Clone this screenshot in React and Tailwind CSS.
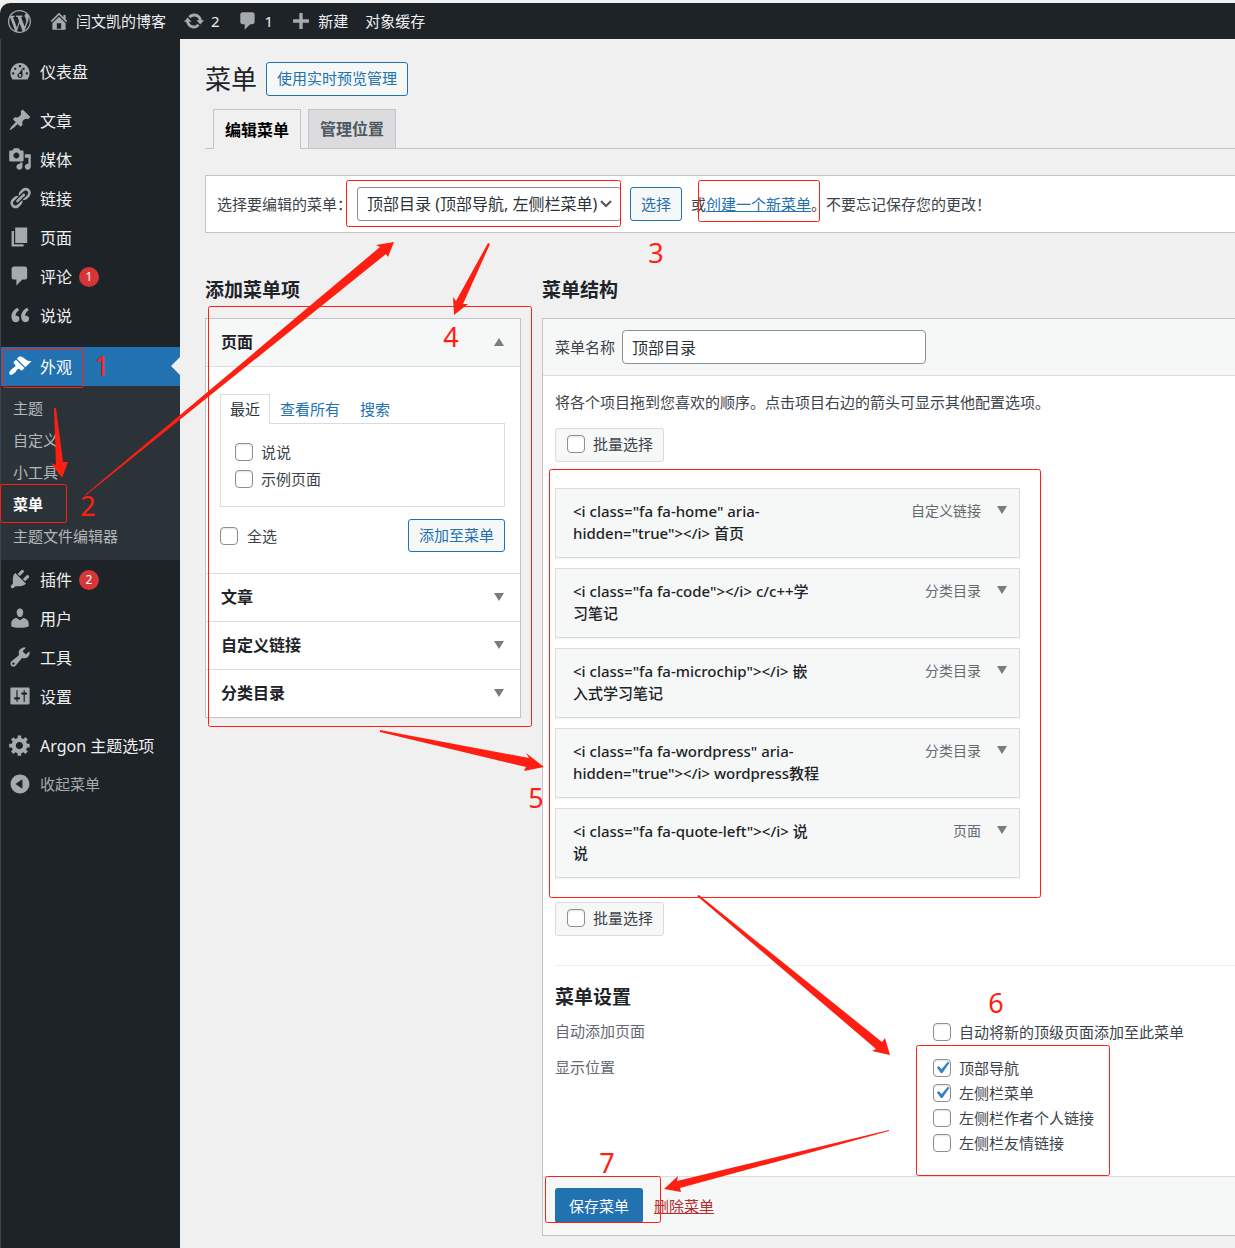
import React, { useState } from "react";
import clsx from "clsx";

const ICONS = {
  wordpress: "M20 10c0-5.51-4.49-10-10-10C4.48 0 0 4.49 0 10c0 5.52 4.48 10 10 10 5.51 0 10-4.48 10-10zM7.78 15.37L4.37 6.22c.55-.02 1.17-.08 1.17-.08.5-.06.44-1.13-.06-1.11 0 0-1.45.11-2.37.11-.18 0-.37 0-.58-.01C4.12 2.69 6.87 1.11 10 1.11c2.33 0 4.45.87 6.05 2.34-.68-.11-1.65.39-1.65 1.58 0 .74.45 1.36.9 2.1.35.61.55 1.36.55 2.46 0 1.49-1.4 5-1.4 5l-3.03-8.37c.54-.02.82-.17.82-.17.5-.05.44-1.25-.06-1.22 0 0-1.44.12-2.38.12-.87 0-2.33-.12-2.33-.12-.5-.03-.56 1.2-.06 1.22l.92.08 1.26 3.41zM17.41 10c.24-.64.74-1.87.43-4.25.7 1.29 1.05 2.71 1.05 4.25 0 3.29-1.73 6.24-4.4 7.78.97-2.59 1.94-5.2 2.92-7.78zM6.1 18.09C3.12 16.65 1.11 13.53 1.11 10c0-1.3.23-2.48.72-3.59C3.25 10.3 4.67 14.2 6.1 18.09zm4.03-6.63l2.58 6.98c-.86.29-1.76.45-2.71.45-.79 0-1.57-.11-2.29-.33.81-2.38 1.62-4.74 2.42-7.1z",
  home: "M16 8.5l1.53 1.53-1.06 1.06L10 4.6l-6.47 6.49-1.06-1.06L10 2.5l4 4v-2h2v4zm-6-2.46l6 5.99V18H4v-5.97zM12 17v-5H8v5h4z",
  update: "M10.2 3.28c3.53 0 6.43 2.61 6.92 6h2.08l-3.5 4-3.5-4h2.32c-.45-1.97-2.21-3.45-4.32-3.45-1.45 0-2.73.71-3.54 1.78L4.95 5.66C6.23 4.2 8.11 3.28 10.2 3.28zm-.4 13.44c-3.52 0-6.43-2.61-6.92-6H.8l3.5-4c1.17 1.33 2.33 2.67 3.5 4H5.48c.45 1.97 2.21 3.45 4.32 3.45 1.45 0 2.73-.71 3.54-1.78l1.71 1.95c-1.28 1.46-3.15 2.38-5.25 2.38z",
  plus: "M17.2 8.5v3h-5.7v5.7h-3v-5.7H2.8v-3h5.7V2.8h3v5.7z",
  dashboard: "M3.76 17h12.48c1.1-1.43 1.76-3.22 1.76-5.17C18 7.19 14.42 3.42 10 3.42s-8 3.77-8 8.41c0 1.95.66 3.74 1.76 5.17zM9 6c0-.55.45-1 1-1s1 .45 1 1-.45 1-1 1-1-.45-1-1zM5 8.2c0-.55.45-1 1-1s1 .45 1 1-.45 1-1 1-1-.45-1-1zm8-1c.55 0 1 .45 1 1s-.45 1-1 1-1-.45-1-1 .45-1 1-1zM3.3 12c0-.55.45-1 1-1s1 .45 1 1-.45 1-1 1-1-.45-1-1zm11.4 0c0-.55.45-1 1-1s1 .45 1 1-.45 1-1 1-1-.45-1-1zM11.8 8l.4 5.2c.2 1.5-.8 2.6-2.2 2.6s-2.4-1.2-2.1-2.5c.2-.9.9-1.4 1.6-1.7zm-1.7 4.6c-.6 0-1.1.5-1.1 1.1s.5 1.1 1.1 1.1 1-.5 1-1.1-.4-1.1-1-1.1z",
  post: "M10.44 3.02l1.82-1.82 6.36 6.35-1.83 1.82c-1.05-.68-2.48-.57-3.41.36l-.75.75c-.92.93-1.04 2.35-.35 3.41l-1.83 1.82-2.41-2.41-2.8 2.79c-.42.42-3.38 2.71-3.8 2.29s1.86-3.39 2.28-3.81l2.79-2.79L4.1 9.36l1.83-1.82c1.05.69 2.48.57 3.4-.36l.75-.75c.93-.92 1.05-2.35.36-3.41z",
  media: "M13 11V4c0-.55-.45-1-1-1h-1.67L9 1H5L3.67 3H2c-.55 0-1 .45-1 1v7c0 .55.45 1 1 1h10c.55 0 1-.45 1-1zM7 4.5c1.38 0 2.5 1.12 2.5 2.5S8.38 9.5 7 9.5 4.5 8.38 4.5 7 5.62 4.5 7 4.5zM14 6h5v10.5c0 1.38-1.12 2.5-2.5 2.5S14 17.88 14 16.5s1.12-2.5 2.5-2.5c.17 0 .34.02.5.05V9h-3V6zm-4 8.05V13h2v3.5c0 1.38-1.12 2.5-2.5 2.5S7 17.88 7 16.5 8.12 14 9.5 14c.17 0 .34.02.5.05z",
  links: "M17.74 2.76c1.68 1.69 1.68 4.41 0 6.1l-1.53 1.52c-1.12 1.12-2.7 1.47-4.14 1.09l2.62-2.61.76-.77.76-.76c.84-.84.84-2.2 0-3.04-.84-.85-2.2-.85-3.04 0l-.77.76-3.38 3.38c-.37-1.44-.02-3.02 1.1-4.14l1.52-1.53c1.69-1.68 4.42-1.68 6.1 0zM8.59 13.43l5.34-5.34c.42-.42.42-1.1 0-1.52-.44-.43-1.13-.39-1.53 0l-5.33 5.34c-.42.42-.42 1.1 0 1.52.44.43 1.13.39 1.52 0zm-.76 2.29l4.14-4.15c.38 1.44.03 3.02-1.09 4.14l-1.52 1.53c-1.69 1.68-4.41 1.68-6.1 0-1.68-1.68-1.68-4.42 0-6.1l1.53-1.52c1.12-1.12 2.7-1.47 4.14-1.1l-4.14 4.15c-.85.84-.85 2.2 0 3.05.84.84 2.2.84 3.04 0z",
  page: "M6 15V2h10v13H6zm-1 1h8v2H3V5h2v11z",
  comments: "M5 2h9c1.1 0 2 .9 2 2v7c0 1.1-.9 2-2 2h-2l-5 5v-5H5c-1.1 0-2-.9-2-2V4c0-1.1.9-2 2-2z",
  quote: "M9.49 13.22c0-.74-.2-1.38-.61-1.9-.62-.78-1.83-.88-2.53-.72-.29-1.65 1.11-3.75 2.92-4.65L7.88 4c-2.73 1.3-5.42 4.28-4.96 8.05C3.21 14.43 4.59 16 6.54 16c.85 0 1.56-.25 2.12-.75s.83-1.18.83-2.03zm8.05 0c0-.74-.2-1.38-.61-1.9-.63-.78-1.83-.88-2.53-.72-.29-1.65 1.11-3.75 2.92-4.65L15.93 4c-2.73 1.3-5.41 4.28-4.95 8.05.29 2.38 1.66 3.95 3.61 3.95.85 0 1.56-.25 2.12-.75s.83-1.18.83-2.03z",
  appearance: "M14.48 11.06L7.41 3.99l1.5-1.5c.5-.56 2.3-.47 3.51.32 1.21.8 1.43 1.28 2.91 2.1 1.18.64 2.45 1.26 4.45.85zm-.71.71L6.7 4.7 4.93 6.47c-.39.39-.39 1.02 0 1.41l1.06 1.06c.39.39.39 1.03 0 1.42-.6.6-1.43 1.11-2.21 1.69-.35.26-.7.53-1.01.84C1.43 14.23.4 16.08 1.4 17.07c.99 1 2.84-.03 4.18-1.36.31-.31.58-.66.85-1.02.57-.78 1.08-1.61 1.69-2.21.39-.39 1.02-.39 1.41 0l1.06 1.06c.39.39 1.02.39 1.41 0z",
  plugins: "M13.11 4.36L9.87 7.6 8 5.73l3.24-3.24c.35-.34 1.05-.2 1.56.32.52.51.66 1.21.31 1.55zm-8 1.77l.91-1.12 9.01 9.01-1.19.84c-.71.71-2.63 1.16-3.82 1.16H6.14L4.9 17.26c-.59.59-1.54.59-2.12 0-.59-.58-.59-1.53 0-2.12l1.24-1.24v-3.88c0-1.13.4-3.19 1.09-3.89zm7.26 3.97l3.24-3.24c.34-.35 1.04-.21 1.55.31.52.51.66 1.21.31 1.55l-3.24 3.25z",
  users: "M10 9.25c-2.27 0-2.73-3.44-2.73-3.44C7 4.02 7.82 2 9.97 2c2.16 0 2.98 2.02 2.71 3.81 0 0-.41 3.44-2.68 3.44zm0 2.57L12.72 10c2.39 0 4.52 2.33 4.52 4.53v2.49s-3.65 1.13-7.24 1.13c-3.65 0-7.24-1.13-7.24-1.13v-2.49c0-2.25 1.94-4.48 4.47-4.48z",
  tools: "M16.68 9.77c-1.34 1.34-3.3 1.67-4.95.99l-5.41 6.52c-.99.99-2.59.99-3.58 0s-.99-2.59 0-3.57l6.52-5.42c-.68-1.65-.35-3.61.99-4.95 1.28-1.28 3.12-1.62 4.72-1.06l-2.89 2.89 2.82 2.82 2.86-2.87c.53 1.58.18 3.39-1.08 4.65zM3.81 16.21c.4.39 1.04.39 1.43 0 .4-.4.4-1.04 0-1.43-.39-.4-1.03-.4-1.43 0-.39.39-.39 1.03 0 1.43z",
  settings: "M18 16V4c0-.55-.45-1-1-1H3c-.55 0-1 .45-1 1v12c0 .55.45 1 1 1h14c.55 0 1-.45 1-1zM8 11h1c.55 0 1 .45 1 1s-.45 1-1 1H8v1.5c0 .28-.22.5-.5.5s-.5-.22-.5-.5V13H6c-.55 0-1-.45-1-1s.45-1 1-1h1V5.5c0-.28.22-.5.5-.5s.5.22.5.5V11zm5-2h-1c-.55 0-1-.45-1-1s.45-1 1-1h1V5.5c0-.28.22-.5.5-.5s.5.22.5.5V7h1c.55 0 1 .45 1 1s-.45 1-1 1h-1v5.5c0 .28-.22.5-.5.5s-.5-.22-.5-.5V9z",
  generic: "M18 12h-2.18c-.17.7-.44 1.35-.81 1.93l1.54 1.54-2.1 2.1-1.54-1.54c-.58.36-1.23.63-1.91.79V19H8v-2.18c-.68-.16-1.33-.43-1.91-.79l-1.54 1.54-2.12-2.12 1.54-1.54c-.36-.58-.63-1.23-.79-1.91H1V9.03h2.17c.16-.7.44-1.35.8-1.94L2.43 5.55l2.1-2.1 1.54 1.54c.58-.37 1.24-.64 1.93-.81V2h3v2.18c.68.16 1.33.43 1.91.79l1.54-1.54 2.12 2.12-1.54 1.54c.36.59.64 1.24.8 1.94H18V12zm-8.5 1.5c1.66 0 3-1.34 3-3s-1.34-3-3-3-3 1.34-3 3 1.34 3 3 3z",
  collapse: "M10 2.16c4.33 0 7.84 3.51 7.84 7.84s-3.51 7.84-7.84 7.84S2.16 14.33 2.16 10 5.71 2.16 10 2.16zm2 11.72V6.12L6.18 10z",
};

const MENU_TOP = [
  { icon: "post", label: "文章" },
  { icon: "media", label: "媒体" },
  { icon: "links", label: "链接" },
  { icon: "page", label: "页面" },
  { icon: "comments", label: "评论", count: 1 },
  { icon: "quote", label: "说说" },
];

const SUBMENU = ["主题", "自定义", "小工具", "菜单", "主题文件编辑器"];

const MENU_BOTTOM = [
  { icon: "plugins", label: "插件", count: 2 },
  { icon: "users", label: "用户" },
  { icon: "tools", label: "工具" },
  { icon: "settings", label: "设置" },
];

const NAV_ITEMS = [
  { title: '<i class="fa fa-home" aria-hidden="true"></i> 首页', type: "自定义链接" },
  { title: '<i class="fa fa-code"></i> c/c++学习笔记', type: "分类目录" },
  { title: '<i class="fa fa-microchip"></i> 嵌入式学习笔记', type: "分类目录" },
  { title: '<i class="fa fa-wordpress" aria-hidden="true"></i> wordpress教程', type: "分类目录" },
  { title: '<i class="fa fa-quote-left"></i> 说说', type: "页面" },
];

const LOCATIONS = [
  { label: "顶部导航", on: true },
  { label: "左侧栏菜单", on: true },
  { label: "左侧栏作者个人链接", on: false },
  { label: "左侧栏友情链接", on: false },
];

function Icon({ name, className = "size-[22px]" }) {
  return (
    <svg viewBox="0 0 20 20" className={clsx("shrink-0 fill-current", className)} aria-hidden="true">
      <path fillRule="evenodd" d={ICONS[name]} />
    </svg>
  );
}

function Caret({ up }) {
  return (
    <svg viewBox="0 0 10 8" className="h-2 w-[10px] shrink-0 fill-[#787c82]" aria-hidden="true">
      <path d={up ? "M5 0l5 8H0z" : "M0 0h10L5 8z"} />
    </svg>
  );
}

function Check({ label, defaultChecked = false, className = "gap-2" }) {
  const [on, setOn] = useState(defaultChecked);
  return (
    <label className={clsx("flex items-center", className)}>
      <span className="relative flex size-[18px] shrink-0">
        <input type="checkbox" checked={on} onChange={() => setOn((v) => !v)} className="size-[18px] appearance-none rounded border border-[#8c8f94] bg-white shadow-[inset_0_1px_2px_rgba(0,0,0,0.1)]" />
        {on && (
          <svg viewBox="0 0 20 20" className="pointer-events-none absolute -left-[3px] -top-[3px] size-6 fill-[#3582c4]" aria-hidden="true">
            <path d="M14.83 4.89l1.34.94-5.81 8.38H9.02L5.78 9.67l1.34-1.25 2.57 2.4z" />
          </svg>
        )}
      </span>
      {label}
    </label>
  );
}

function OutlineButton({ children, className }) {
  return (
    <button type="button" className={clsx("shrink-0 rounded-[3px] border border-[#2271b1] bg-[#f6f7f7] px-[10px] text-[#2271b1]", className)}>
      {children}
    </button>
  );
}

function BarItem({ icon, children }) {
  return (
    <a href="#" className="flex items-center gap-[6px]">
      {icon && <span className="text-[#a7aaad]"><Icon name={icon} /></span>}
      {children}
    </a>
  );
}

function AdminBar() {
  return (
    <header className="flex h-9 items-center gap-[17px] rounded-tl-[10px] bg-[#1d2327] pl-2 text-[#f0f0f1]">
      <a href="#" aria-label="WordPress" className="text-[#a7aaad]"><Icon name="wordpress" className="size-[23px]" /></a>
      <BarItem icon="home">闫文凯的博客</BarItem>
      <BarItem icon="update">2</BarItem>
      <BarItem icon="comments">1</BarItem>
      <BarItem icon="plus">新建</BarItem>
      <BarItem>对象缓存</BarItem>
    </header>
  );
}

function SideItem({ icon, label, count, current, muted }) {
  return (
    <a href="#" className={clsx("relative flex h-[39px] items-center gap-2 pl-[7px] text-base", current ? "bg-[#2271b1] text-white" : muted ? "text-[#a7aaad]" : "text-[#f0f0f1]")}>
      <span className={clsx("pb-[2px]", current ? "text-white" : "text-[#a7aaad]")}><Icon name={icon} className="size-6" /></span>
      <span className={muted ? "text-[15px]" : ""}>{label}</span>
      {count && <span className="-ml-px flex size-5 items-center justify-center rounded-full bg-[#d63638] text-xs text-white">{count}</span>}
      {current && <span className="absolute right-0 top-[10px] border-y-[9px] border-r-[9px] border-y-transparent border-r-[#f0f0f1]" />}
    </a>
  );
}

function Sidebar() {
  return (
    <aside className="w-[180px] shrink-0 border-l border-[#3c4349] bg-[#1d2327] pt-[13px]">
      <SideItem icon="dashboard" label="仪表盘" />
      <nav className="mt-[10px]">
        {MENU_TOP.map((m) => <SideItem key={m.label} {...m} />)}
      </nav>
      <div className="mt-3">
        <SideItem icon="appearance" label="外观" current />
        <ul className="bg-[#2c3338] pb-2 pt-[6px]">
          {SUBMENU.map((s) => (
            <li key={s}>
              <a href="#" className={clsx("flex h-8 items-center pl-3", s === "菜单" ? "font-bold text-white" : "text-[#b5b8bb]")}>{s}</a>
            </li>
          ))}
        </ul>
        {MENU_BOTTOM.map((m) => <SideItem key={m.label} {...m} />)}
      </div>
      <div className="mt-[10px]">
        <SideItem icon="generic" label="Argon 主题选项" />
        <SideItem icon="collapse" label="收起菜单" muted />
      </div>
    </aside>
  );
}

function AddItems() {
  return (
    <section className="w-[316px] shrink-0">
      <h2 className="text-[19px] font-bold leading-[26px] text-[#1d2327]">添加菜单项</h2>
      <div className="mt-[15px] border border-[#c3c4c7] bg-white">
        <button type="button" className="flex h-12 w-full items-center justify-between border-b border-[#dcdcde] bg-[#f6f7f7] pb-px pl-[15px] pr-4 text-base font-bold text-[#1d2327]">
          页面 <Caret up />
        </button>
        <div className="pb-[21px] pl-[14px] pr-[15px] pt-[27px]">
          <div className="flex h-[30px] items-stretch">
            <button type="button" className="relative border border-b-0 border-[#dcdcde] bg-white px-[9px] pb-[2px] text-[#2c3338]">最近</button>
            <button type="button" className="px-[10px] pb-px text-[#2271b1]">查看所有</button>
            <button type="button" className="px-[10px] pb-px text-[#2271b1]">搜索</button>
          </div>
          <div className="-mt-px flex h-[84px] flex-col border border-[#dcdcde] px-[14px] pt-[14px]">
            <Check label="说说" className="h-[27px] gap-2" />
            <Check label="示例页面" className="h-[27px] gap-2" />
          </div>
          <div className="mt-3 flex items-center justify-between">
            <Check label="全选" className="gap-[9px]" />
            <OutlineButton className="h-[33px] pb-px">添加至菜单</OutlineButton>
          </div>
        </div>
        {["文章", "自定义链接", "分类目录"].map((t) => (
          <button key={t} type="button" className="flex h-12 w-full items-center justify-between border-t border-[#dcdcde] pb-[2px] pl-[15px] pr-4 text-base font-bold text-[#1d2327]">
            {t} <Caret />
          </button>
        ))}
      </div>
    </section>
  );
}

function BulkSelect() {
  return (
    <div className="flex">
      <Check label="批量选择" className="h-[34px] gap-2 rounded-[3px] border border-[#dcdcde] bg-[#f6f7f7] pb-[2px] pl-[11px] pr-[10px]" />
    </div>
  );
}

function MenuStructure() {
  const [name, setName] = useState("顶部目录");
  return (
    <section className="min-w-0 flex-1">
      <h2 className="text-[19px] font-bold leading-[26px] text-[#1d2327]">菜单结构</h2>
      <div className="mt-[15px] border-y border-l border-[#c3c4c7] bg-white">
        <div className="flex items-center gap-[7px] border-b border-[#dcdcde] bg-[#f6f7f7] px-3 py-[11px]">
          <label htmlFor="menu-name">菜单名称</label>
          <input id="menu-name" value={name} onChange={(e) => setName(e.target.value)} className="h-[34px] w-[304px] rounded border border-[#8c8f94] bg-white px-[9px] text-base text-[#2c3338]" />
        </div>
        <div className="pb-5 pl-3 pt-[14px]">
          <p className="mb-[14px] leading-6">将各个项目拖到您喜欢的顺序。点击项目右边的箭头可显示其他配置选项。</p>
          <BulkSelect />
          <ul className="mb-6 mt-[26px] flex w-[465px] flex-col gap-[10px]">
            {NAV_ITEMS.map((n) => (
              <li key={n.title} className="flex h-[70px] border border-[#dcdcde] bg-[#f6f7f7] pl-[17px] pr-3 pt-[11px] shadow-[0_1px_1px_rgba(0,0,0,0.04)]">
                <span className="w-[248px] font-medium leading-[22px] text-[#1d2327]">{n.title}</span>
                <span className="ml-auto text-sm leading-[22px] text-[#646970]">{n.type}</span>
                <button type="button" aria-label="展开" className="ml-4 flex h-5 items-center"><Caret /></button>
              </li>
            ))}
          </ul>
          <BulkSelect />
          <div className="mt-[29px] border-t border-[#f0f0f1] pt-[18px]">
            <h3 className="text-[19px] font-bold leading-[26px] text-[#1d2327]">菜单设置</h3>
            <div className="mt-[9px] flex">
              <span className="w-[378px] shrink-0 leading-6 text-[#646970]">自动添加页面</span>
              <Check label="自动将新的顶级页面添加至此菜单" className="h-[25px] gap-2" />
            </div>
            <div className="mt-[11px] flex">
              <span className="w-[378px] shrink-0 leading-6 text-[#646970]">显示位置</span>
              <div>
                {LOCATIONS.map((l) => <Check key={l.label} label={l.label} defaultChecked={l.on} className="h-[25px] gap-2" />)}
              </div>
            </div>
          </div>
        </div>
        <div className="mt-px flex items-center gap-[11px] border-t border-[#dcdcde] bg-[#f6f7f7] px-3 pb-3 pt-[11px]">
          <button type="button" className="h-[35px] rounded-[3px] bg-[#2271b1] px-[14px] text-white">保存菜单</button>
          <a href="#" className="text-[#b32d2e] underline">删除菜单</a>
        </div>
      </div>
    </section>
  );
}

const BOXES = [
  [3, 348, 80, 39],
  [0, 484, 66, 38],
  [346, 180, 274, 46],
  [698, 180, 121, 41],
  [208, 306, 323, 420],
  [549, 469, 491, 428],
  [916, 1045, 193, 130],
  [545, 1176, 115, 46],
];

const ARROWS = [
  "54,408 56,408 63,462 68,462 62,478 51,463 56,465",
  "85,496 86,494 380,247 376,245 394,242 388,257 386,254",
  "488,243 490,244 463,304 468,304 454,315 453,297 456,301",
  "380,730 529,758 526,753 544,767 524,771 526,767 380,732",
  "697,896 699,895 882,1042 885,1038 890,1055 872,1051 876,1049",
  "889,1130 889,1131 680,1188 681,1192 664,1189 678,1176 677,1181",
];

const STEPS = [
  [102, 376], [88, 516], [656, 263], [451, 347], [536, 808], [996, 1013], [607, 1173],
];

// Step-by-step marks drawn over the page
function Annotations() {
  return (
    <svg width="1235" height="1248" className="pointer-events-none absolute left-0 top-0 fill-[#ff1f12]" aria-hidden="true">
      {BOXES.map(([x, y, w, h]) => (
        <rect key={`${x}-${y}`} x={x + 0.5} y={y + 0.5} width={w} height={h} rx="2" fill="none" stroke="#ff1f12" />
      ))}
      {ARROWS.map((p) => <polygon key={p} points={p} />)}
      {STEPS.map(([x, y], i) => (
        <text key={i} x={x} y={y} textAnchor="middle" fontSize="27">{i + 1}</text>
      ))}
    </svg>
  );
}

export default function App() {
  return (
    <div className="relative flex min-h-screen flex-col overflow-hidden bg-[#f0f0f1] pt-[3px] font-['Noto_Sans','Noto_Sans_CJK_SC',sans-serif] text-[15px] leading-6 text-[#3c434a]">
      <AdminBar />
      <div className="flex flex-1">
        <Sidebar />
        <main className="min-w-0 flex-1 pb-3 pl-[25px] pt-[23px]">
          <div className="flex h-[34px] items-center gap-[9px]">
            <h1 className="text-[26px] leading-[34px] text-[#1d2327]">菜单</h1>
            <OutlineButton className="h-[34px] pb-[2px]">使用实时预览管理</OutlineButton>
          </div>
          <nav className="mt-[13px] flex h-10 gap-[7px] border-b border-[#c3c4c7] pl-2 text-base font-semibold">
            <a href="#" className="-mb-px flex items-center border border-b-0 border-[#c3c4c7] bg-[#f0f0f1] px-[11px] text-black">编辑菜单</a>
            <a href="#" className="flex items-center border border-b-0 border-[#c3c4c7] bg-[#dcdcde] px-[11px] text-[#50575e]">管理位置</a>
          </nav>
          <div className="mt-[26px] flex h-[58px] items-center border-y border-l border-[#c3c4c7] bg-white pl-[11px]">
            <label htmlFor="menu-select" className="mr-[5px] shrink-0">选择要编辑的菜单：</label>
            <div className="relative shrink-0">
              <select id="menu-select" className="h-[34px] w-[264px] appearance-none rounded-[3px] border border-[#8c8f94] bg-white pl-[9px] pr-5 text-base text-[#2c3338]">
                <option>顶部目录 (顶部导航, 左侧栏菜单)</option>
              </select>
              <svg viewBox="0 0 12 8" className="pointer-events-none absolute right-[9px] top-[13px] h-2 w-3" fill="none" stroke="#50575e" strokeWidth="2" aria-hidden="true">
                <path d="M1 1l5 5 5-5" />
              </svg>
            </div>
            <OutlineButton className="ml-[9px] h-[34px]">选择</OutlineButton>
            <p className="ml-[9px] whitespace-nowrap">或<a href="#" className="text-[#2271b1] underline">创建一个新菜单</a>。不要忘记保存您的更改！</p>
          </div>
          <div className="mt-11 flex gap-[21px]">
            <AddItems />
            <MenuStructure />
          </div>
        </main>
      </div>
      <Annotations />
    </div>
  );
}
